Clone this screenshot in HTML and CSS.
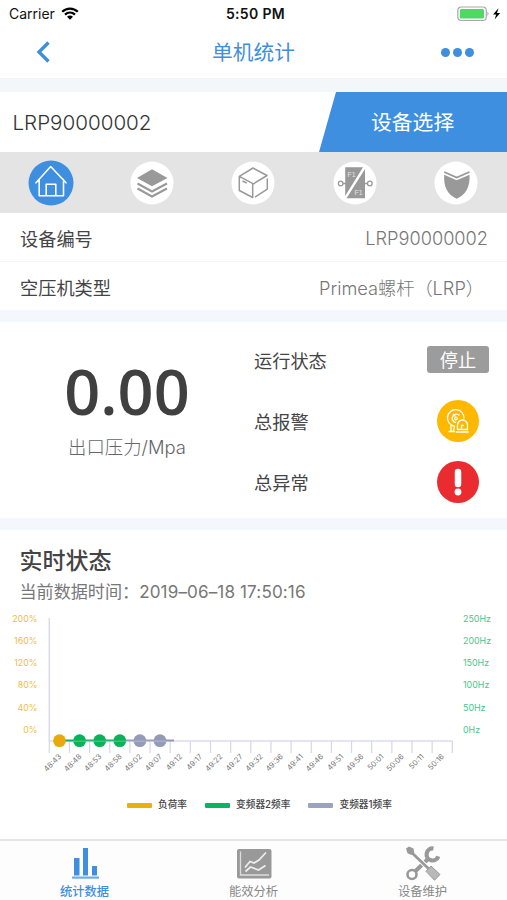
FILE: index.html
```html
<!DOCTYPE html>
<html lang="zh-CN">
<head>
<meta charset="utf-8">
<title>单机统计</title>
<link rel="stylesheet" href="styles.css">
</head>
<body>
<div class="app">
  <div class="status">
    <div class="carrier"><span>Carrier</span>
      <svg width="18" height="13" viewBox="0 0 18 13" fill="none" stroke="#000" stroke-width="2.3"><path d="M1.2 4.8C5.6.5 12.4.5 16.8 4.8M4 7.7c2.9-2.7 7.1-2.7 10 0"/><path d="M6 9.7c1.8-1.5 4.2-1.5 6 0L9 12.8z" fill="#000" stroke="none"/></svg>
    </div>
    <div class="clock">5:50 PM</div>
    <div class="battery">
      <svg width="45" height="16" viewBox="0 0 45 16"><rect x=".8" y="1" width="28.5" height="13.5" rx="3.5" fill="#fff" stroke="#a9a9a9" stroke-width="1.2"/><rect x="2.8" y="3" width="24.2" height="9.5" rx="1.5" fill="#4cd964"/><path d="M30.5 5.5q2 2.2 0 4.5z" fill="#999"/><path d="M41.5 2.2 36 8.6h3.2l-1.6 5L43.2 7H40z" fill="#000"/></svg>
    </div>
  </div>
  <header class="nav">
    <svg class="back" width="16" height="22" viewBox="0 0 16 22" fill="none" stroke="#3e8fe0" stroke-width="3.4"><path d="M13.500 1.500 4 11l9.500 9.500"/></svg>
    <h1>单机统计</h1>
    <div class="more"><i></i><i></i><i></i></div>
  </header>

  <div class="selector">
    <div class="device">LRP90000002</div>
    <div class="choose">设备选择</div>
  </div>

  <div class="modes">
    <div class="mode"><svg width="46" height="46" viewBox="0 0 46 46"><circle cx="23" cy="23" r="22.5" fill="#3e8fe0"/><g fill="none" stroke="#fff" stroke-width="1.6" stroke-linejoin="round" stroke-linecap="round"><path d="M8 22.8 22.7 6.5 38 22.8M11.2 19.5v16.2h24.3V19.5M18.2 35.5V24.2h9.6v11.3"/></g></svg></div>
    <div class="mode"><svg width="46" height="46" viewBox="0 0 46 46"><circle cx="23" cy="23" r="21.5" fill="#fff"/><path d="M23 9.2 38.5 18 23 26.2 8 18z" fill="#999"/><path d="m8.5 23.5 14.5 8 15-8M8.5 28.5l14.5 8 15-8" fill="none" stroke="#999" stroke-width="2"/></svg></div>
    <div class="mode"><svg width="46" height="46" viewBox="0 0 46 46"><circle cx="23" cy="23" r="21.5" fill="#fff"/><path d="M9.3 16.3 23 8l14 7.5-13.5 8.3zM9.3 16.3v14.2l13.4 7V23.8M25 37.2l12.3-8V18.5M12.5 21l4.2 2" fill="none" stroke="#999" stroke-width="1.5" stroke-linejoin="round"/></svg></div>
    <div class="mode"><svg width="46" height="46" viewBox="0 0 46 46"><circle cx="23" cy="23" r="21.5" fill="#fff"/><path d="M13.2 7.2H31L13.2 36zM33 9v29.2H14.5z" fill="#999"/><g fill="none" stroke="#999" stroke-width="1.3"><circle cx="8.7" cy="23.5" r="2.3"/><circle cx="37.8" cy="23.5" r="2.3"/><path d="M11 23.5h3M32.5 23.5h3"/></g><text x="15.5" y="16.5" class="fi">F1</text><text x="22.5" y="35" class="fi">F1</text></svg></div>
    <div class="mode"><svg width="46" height="46" viewBox="0 0 46 46"><circle cx="23" cy="23" r="21.5" fill="#fff"/><path d="m11.2 12 12.5 5.600 12.800-5.600" fill="none" stroke="#999" stroke-width="1.8"/><path d="M11.2 14.800l12.500 5.400 12.800-5.400c.8 12-3.500 20-12.800 24-9.200-4-13.300-12-12.500-24z" fill="#999"/></svg></div>
  </div>

  <div class="row"><span>设备编号</span><span class="value">LRP90000002</span></div>
  <div class="row second"><span>空压机类型</span><span class="value">Primea螺杆（LRP）</span></div>

  <section class="summary">
    <div class="pressure">
      <div class="number">0.00</div>
      <div class="unit">出口压力/Mpa</div>
    </div>
    <div class="states">
      <div class="state"><span>运行状态</span><b class="stop">停止</b></div>
      <div class="state"><span>总报警</span>
        <svg class="round" width="42" height="42" viewBox="0 0 42 42"><circle cx="21" cy="21" r="21" fill="#ffb800"/><g fill="none" stroke="#fff" stroke-width="1.3"><path d="M27 18.500a8.300 8.300 0 1 0-9.500 7.600"/><path d="M14 25v6M11.500 31.500h6.500M17.500 26l-1 5.500M22.500 15.500a4.200 4.200 0 1 0-3.500 7M16 14l2.500 2.500"/><circle cx="19" cy="18.500" r="1.300"/><path d="M20.500 29.500V25a5 5 0 0 1 10 0v4.500zM18.800 32h13M24.500 29v-3.500h2.500"/></g></svg></div>
      <div class="state"><span>总异常</span>
        <svg class="round" width="42" height="42" viewBox="0 0 42 42"><circle cx="21" cy="21" r="21" fill="#ea2b30"/><path d="M21 11v12" stroke="#fff" stroke-width="6.5" stroke-linecap="round"/><circle cx="21" cy="31" r="3.4" fill="#fff"/></svg></div>
    </div>
  </section>

  <section class="live">
    <h2>实时状态</h2>
    <p>当前数据时间：<span>2019–06–18 17:50:16</span></p>
    <svg class="chart" id="chart" width="507" height="172" viewBox="0 608 507 172"></svg>
    <div class="legend">
      <span><i class="load"></i>负荷率</span>
      <span><i class="freq2"></i>变频器2频率</span>
      <span><i class="freq1"></i>变频器1频率</span>
    </div>
  </section>

  <nav class="tabs">
    <div class="tab active"><svg width="36" height="36" viewBox="0 0 36 36" fill="#3e8fe0"><path d="M7 13h5.5v17.500H7zM16 3h5v27.500h-5zM25 21h5v9.500h-5z"/><path d="M5 31.500h27v2.200H5z" opacity=".75"/></svg><span>统计数据</span></div>
    <div class="tab"><svg width="36" height="36" viewBox="0 0 36 36"><rect x="1" y="4" width="34.5" height="29.5" rx="2" fill="#999"/><path d="M4.5 6.500v23.500h28.500" fill="none" stroke="#ddd" stroke-width="1.3"/><path d="M9 22.500l5-6 4 1.500 5-3 7-7.500M9.500 26.500l5-4.500 4 1.500 4 1.500 7-4.500" fill="none" stroke="#eee" stroke-width="1.7"/></svg><span>能效分析</span></div>
    <div class="tab"><svg width="36" height="36" viewBox="0 0 36 36"><path d="M22.500 14.500 9 27.500" stroke="#999" stroke-width="4"/><circle cx="7" cy="29.500" r="4.500" fill="#fff" stroke="#999" stroke-width="2.600"/><path d="M28.500 3.500a6 6 0 1 0 4.800 7.800" fill="none" stroke="#999" stroke-width="4.200"/><path d="M4 5l19 18" stroke="#fff" stroke-width="4.500"/><path d="M5 6l20 19" stroke="#999" stroke-width="2.800"/><path d="m1 3.500 3-2 4.500 2 .8 4.200-3 2.300-3.800-1.700z" fill="#999"/><path d="m26 21 9 8.500-5.500 5.800-8.500-9z" fill="#b8b8b8" stroke="#999"/></svg><span>设备维护</span></div>
  </nav>
</div>
<script src="chart.js"></script>
</body>
</html>
```
FILE: styles.css
```css
* { box-sizing: border-box; }
body {
  margin: 0;
  background: #fff;
  color: #444;
  font-family: Inter, "Noto Sans CJK SC", sans-serif;
}
svg { display: block; flex: none; }
.app { width: 507px; height: 900px; display: flex; flex-direction: column; overflow: hidden; }
.app > * { flex: none; }

.status {
  height: 26px;
  display: grid;
  grid-template-columns: 1fr auto 1fr;
  align-items: center;
  padding: 1px 5px 0 9px;
  color: #111;
  font-size: 14px;
  line-height: 18px;
}
.carrier { display: flex; align-items: center; gap: 6px; }
.clock { font-weight: 600; font-size: 14px; letter-spacing: .35px; }
.battery { justify-self: end; }

.nav {
  height: 53px;
  display: grid;
  grid-template-columns: 1fr auto 1fr;
  align-items: center;
  padding: 0 33px 0 35px;
  border-bottom: 1px solid #f5f5f5;
  color: #3e8fe0;
}
.nav h1 { margin: 0; padding: 2px 2px 0 0; font-size: 20.7px; font-weight: 400; line-height: 30px; }
.more { display: flex; gap: 3px; justify-self: end; }
.more i { width: 9px; height: 9px; border-radius: 50%; background: #3e8fe0; }

.selector {
  height: 73px;
  border-top: 13px solid #f4f7fa;
  display: flex;
  justify-content: space-between;
  line-height: 62px;
}
.device { padding-left: 12.5px; font-size: 20.6px; font-weight: 300; color: #333; }
.choose {
  width: 188px;
  padding-left: 52px;
  background: #3e8fe0;
  color: #fff;
  font-size: 20.8px;
  clip-path: polygon(17px 0, 100% 0, 100% 100%, 0 100%);
}

.modes { height: 61px; display: flex; background: #e4e4e4; align-items: center; }
.mode { width: 101.3px; display: flex; justify-content: center; }
.fi { font: 7px "Liberation Sans", sans-serif; fill: #e4e4e4; }

.row {
  height: 49px;
  padding: 2px 19px 0 20px;
  display: flex;
  justify-content: space-between;
  align-items: center;
  font-size: 18.2px;
  border-bottom: 1px solid #f5f5f5;
}
.row.second { height: 48px; border-bottom: 0; padding: 1px 23px 0 20px; }
.value { color: #777; font-size: 18.2px; font-weight: 300; }

.summary {
  height: 208px;
  border-top: 12px solid #f4f7fb;
  display: flex;
}
.pressure { width: 254px; text-align: center; padding-top: 32px; }
.number { font: 600 63px/74px "Open Sans", sans-serif; color: #404040; }
.unit { font-size: 18.4px; font-weight: 300; line-height: 26px; color: #666; padding-top: 6px; }
.states { flex: 1; padding: 7px 18px 0 0; }
.state { height: 61px; display: flex; justify-content: space-between; align-items: center; font-size: 18.2px; }
.round { margin-right: 10px; }
.stop {
  width: 62px;
  height: 27px;
  border-radius: 3px;
  background: #9c9c9c;
  color: #fff;
  font-weight: 400;
  line-height: 28px;
  text-align: center;
}

.live { height: 321px; border-top: 12px solid #f4f7fb; }
.live h2 { margin: 0; padding: 14px 20px 0 19.5px; font-size: 23px; line-height: 34px; font-weight: 500; color: #444; }
.live p { margin: 0; padding: 0 20px 0 19.5px; font-size: 17.1px; line-height: 27px; color: #777; height: 30px; }
.live p span { letter-spacing: .12px; }
.axis { font-size: 8.9px; }
.left { fill: #efbd49; text-anchor: end; }
.right { fill: #4ac78a; }
.time { font-size: 7.5px; fill: #777; text-anchor: end; }
.legend { display: flex; gap: 18px; padding-left: 127px; padding-top: 17px; font-size: 9.7px; line-height: 16px; font-weight: 500; }
.legend span { display: flex; align-items: center; gap: 6px; }
.legend i { width: 25px; height: 5px; border-radius: 1px; }
.load { background: #e9b10c; }
.freq2 { background: #08b562; }
.freq1 { background: #9ba4bf; }

.tabs { height: 61px; border-top: 2px solid #e6e6e6; background: #fdfdfd; display: flex; }
.tab { flex: 1; display: flex; flex-direction: column; align-items: center; padding-top: 4px; font-size: 12.3px; line-height: 18px; color: #888; }
.tab span { padding-top: 2px; }
.tab.active { color: #3e8fe0; font-weight: 500; }
```
FILE: chart.js
```js
const times = ["48:43","48:48","48:53","48:58","49:02","49:07","49:12","49:17","49:22","49:27","49:32","49:36","49:41","49:46","49:51","49:56","50:01","50:06","50:11","50:16"];
const loads = ["200%","160%","120%","80%","40%","0%"];
const freqs = ["250Hz","200Hz","150Hz","100Hz","50Hz","0Hz"];
const x0 = 49.3, step = 20.15, base = 741;
let out = "";
loads.forEach((t, i) => {
  const y = 621.5 + i * 22.3;
  out += `<text class="axis left" x="37.5" y="${y}">${t}</text><text class="axis right" x="463" y="${y}">${freqs[i]}</text>`;
});
out += `<path d="M${x0} 618V${base}H452.5" fill="none" stroke="#dcdcf0" stroke-width="1.6"/>`;
for (let i = 0; i <= 20; i++) {
  const x = x0 + i * step;
  out += `<path d="M${x} ${base}v12" stroke="#d6d6ee" stroke-width="1.2"/>`;
}
times.forEach((t, i) => {
  const x = x0 + i * step + 12.5;
  out += `<text class="time" transform="translate(${x} 757) rotate(-45)">${t}</text>`;
});
out += `<path d="M60 740.5H120" stroke="#08b562" stroke-width="1.8"/><path d="M120 740.5H174" stroke="#8f98b8" stroke-width="1.8"/>`;
["#e8a90c","#08b259","#08b259","#08b259","#949bb8","#949bb8"].forEach((c, i) => {
  out += `<circle cx="${59.5 + i * 20.1}" cy="740.7" r="6.4" fill="${c}"/>`;
});
out += `<path d="M73 741.2H166" stroke="#fff" stroke-opacity=".3" stroke-width="1"/>`;
document.getElementById("chart").innerHTML = out;
```
